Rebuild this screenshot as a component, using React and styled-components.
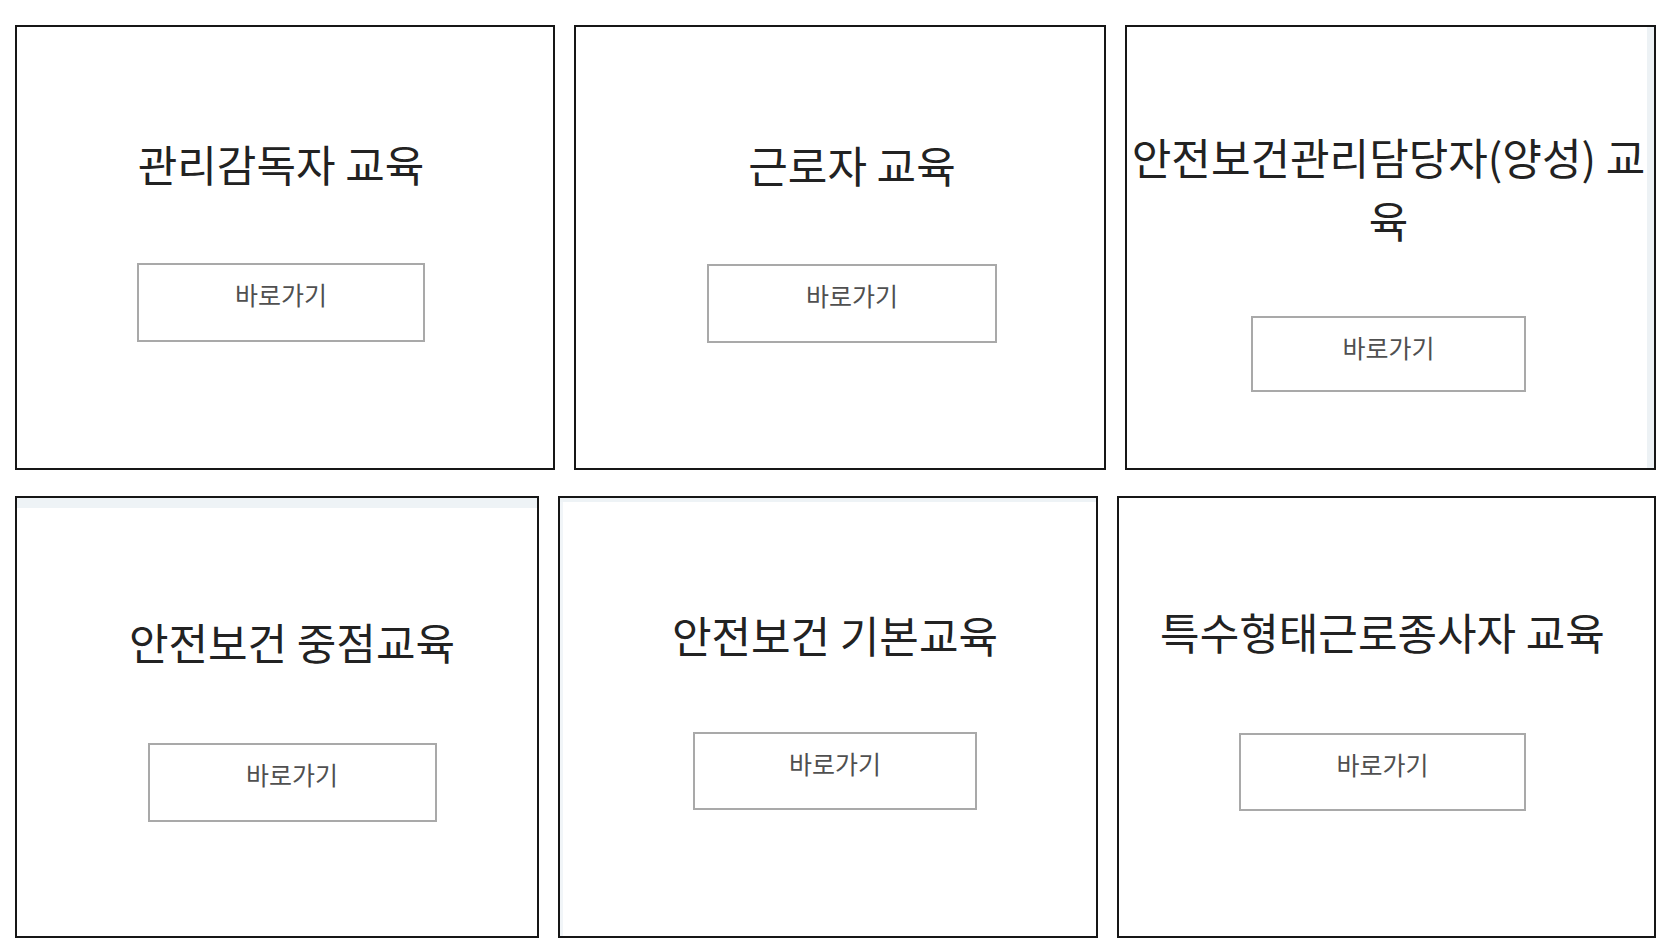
import styled, { createGlobalStyle } from 'styled-components';

const GlobalStyle = createGlobalStyle`
	html, body {
		margin: 0;
		padding: 0;
		background: #ffffff;
	}

	body {
		font-family: 'Noto Sans CJK KR', 'Noto Sans', sans-serif;
		color: #222222;
	}
`;

const Page = styled.div`
	display: flex;
	flex-direction: column;
	gap: 26px;
	padding: 25px 0 0 15px;
`;

const Row = styled.div`
	display: flex;
	gap: 19px;
`;

const Card = styled.div`
	box-sizing: border-box;
	display: flex;
	flex-direction: column;
	align-items: center;
	width: ${(props) => props.$width}px;
	height: ${(props) => props.$height}px;
	padding-top: ${(props) => props.$top}px;
	padding-left: ${(props) => Math.max(0, props.$shift * 2)}px;
	padding-right: ${(props) => Math.max(0, -props.$shift * 2)}px;
	border: 2px solid #161616;
	background: #ffffff;
	box-shadow: ${(props) => props.$tint || 'none'};
`;

const Title = styled.h2`
	margin: 0 0 ${(props) => props.$gap}px;
	font-size: 43px;
	font-weight: 400;
	line-height: 63px;
	color: #222222;
	text-align: center;
	word-break: break-all;
`;

const GoButton = styled.a`
	box-sizing: border-box;
	display: block;
	width: ${(props) => props.$width}px;
	height: ${(props) => props.$height}px;
	padding-top: 11px;
	border: 2px solid #a9a9a9;
	font-size: 25px;
	line-height: 36px;
	color: #505050;
	text-align: center;
	text-decoration: none;
`;

const rows = [
	[
		{ title: '관리감독자 교육', width: 540, top: 105, shift: -4, gap: 68, btnW: 288, btnH: 79 },
		{ title: '근로자 교육', width: 532, top: 106, shift: 12, gap: 68, btnW: 290, btnH: 79 },
		{
			title: '안전보건관리담당자(양성) 교육',
			width: 531,
			top: 98,
			shift: -2,
			gap: 65,
			btnW: 275,
			btnH: 76,
			tint: 'inset -7px 0 0 #edf2f5'
		}
	],
	[
		{
			title: '안전보건 중점교육',
			width: 524,
			top: 112,
			shift: 15,
			gap: 70,
			btnW: 289,
			btnH: 79,
			tint: 'inset 0 10px 0 #eef3f6'
		},
		{
			title: '안전보건 기본교육',
			width: 540,
			top: 105,
			shift: 7,
			gap: 66,
			btnW: 284,
			btnH: 78,
			tint: 'inset 0 4px 0 #eef3f6, inset 3px 0 0 #f1f5f8'
		},
		{ title: '특수형태근로종사자 교육', width: 539, top: 102, shift: -4, gap: 70, btnW: 287, btnH: 78 }
	]
];

const heights = [445, 442];

function App() {
	return (
		<>
			<GlobalStyle />
			<Page>
				{rows.map((row, r) => (
					<Row key={r}>
						{row.map((card) => (
							<Card
								key={card.title}
								$width={card.width}
								$height={heights[r]}
								$top={card.top}
								$shift={card.shift}
								$tint={card.tint}
							>
								<Title $gap={card.gap}>{card.title}</Title>
								<GoButton
									href="#"
									$width={card.btnW}
									$height={card.btnH}
								>
									바로가기
								</GoButton>
							</Card>
						))}
					</Row>
				))}
			</Page>
		</>
	);
}

export default App;
